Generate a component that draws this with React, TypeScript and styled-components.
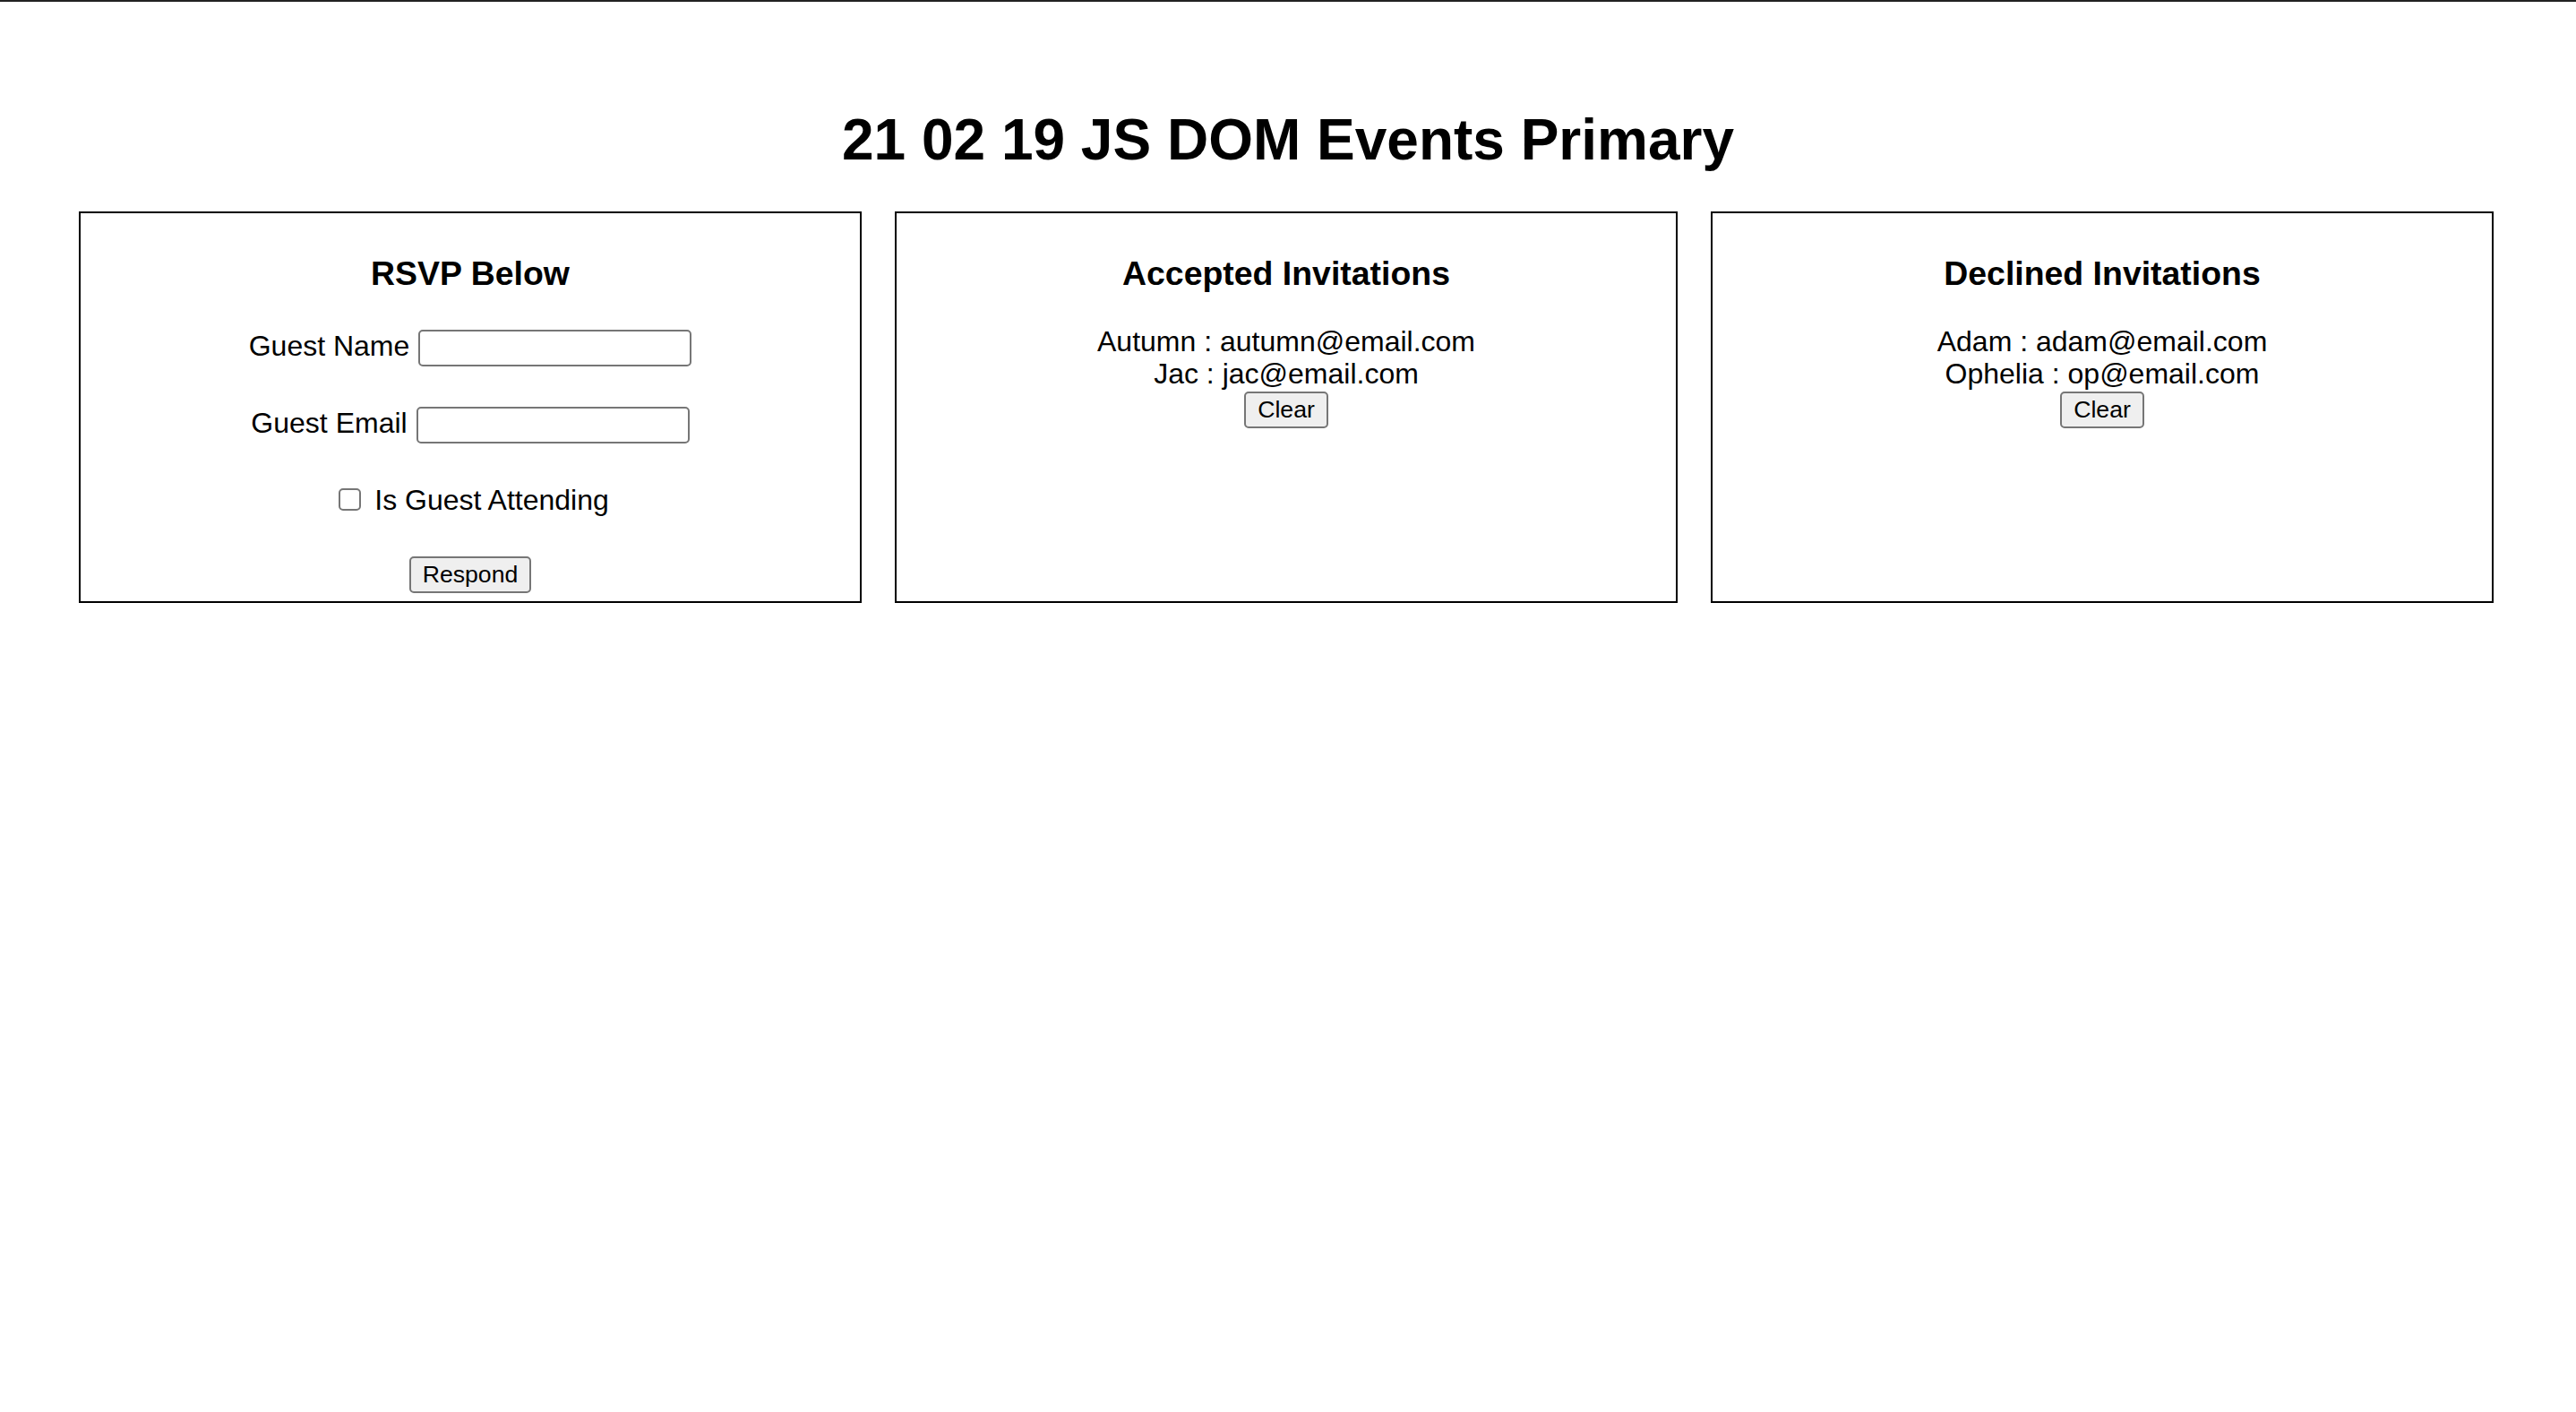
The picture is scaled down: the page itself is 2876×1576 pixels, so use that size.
import React from 'react';
import styled, { createGlobalStyle } from 'styled-components';

const accepted = [
  { name: 'Autumn', email: 'autumn@email.com' },
  { name: 'Jac', email: 'jac@email.com' },
];

const declined = [
  { name: 'Adam', email: 'adam@email.com' },
  { name: 'Ophelia', email: 'op@email.com' },
];

function GuestList({ title, guests }: { title: string; guests: { name: string; email: string }[] }) {
  return (
    <Card>
      <CardTitle>{title}</CardTitle>
      <List>
        {guests.map((guest, idx) => (
          <ListItem key={idx}>
            {guest.name} : {guest.email}
          </ListItem>
        ))}
      </List>
      <Button $top={2}>Clear</Button>
    </Card>
  );
}

export default function App() {
  return (
    <>
      <GlobalStyle />
      <Page>
        <Title>21 02 19 JS DOM Events Primary</Title>
        <Cards>
          <Card>
            <CardTitle>RSVP Below</CardTitle>
            <FieldRow $top={41}>
              <Label>Guest Name</Label>
              <TextInput type='text' />
            </FieldRow>
            <FieldRow $top={45}>
              <Label>Guest Email</Label>
              <TextInput type='text' />
            </FieldRow>
            <CheckRow>
              <Checkbox type='checkbox' />
              <Label>Is Guest Attending</Label>
            </CheckRow>
            <Button $top={44}>Respond</Button>
          </Card>
          <GuestList title='Accepted Invitations' guests={accepted} />
          <GuestList title='Declined Invitations' guests={declined} />
        </Cards>
      </Page>
    </>
  );
}

const GlobalStyle = createGlobalStyle`
  html, body {
    margin: 0;
    padding: 0;
    background: #fff;
  }
  body {
    font-family: 'Liberation Sans', Arial, sans-serif;
    color: #000;
  }
`;

const Page = styled.div`
  border-top: 2px solid #222;
  padding-top: 117px;
  min-height: 1440px;
`;

const Title = styled.h1`
  margin: 0;
  font-size: 64px;
  line-height: 74px;
  font-weight: 700;
  text-align: center;
`;

const Cards = styled.div`
  display: flex;
  gap: 37px;
  margin-top: 43px;
  padding-left: 88px;
`;

const Card = styled.div`
  box-sizing: border-box;
  width: 874px;
  height: 437px;
  border: 2px solid #000;
  display: flex;
  flex-direction: column;
  align-items: center;
  text-align: center;
`;

const CardTitle = styled.h3`
  margin: 46px 0 0;
  font-size: 37.44px;
  line-height: 43px;
  font-weight: 700;
`;

const FieldRow = styled.div<{ $top: number }>`
  display: flex;
  align-items: flex-start;
  justify-content: center;
  margin-top: ${(p) => p.$top}px;
  height: 41px;
`;

const Label = styled.span`
  font-size: 32px;
  line-height: 37px;
  white-space: nowrap;
`;

const TextInput = styled.input`
  box-sizing: border-box;
  width: 305px;
  height: 41px;
  margin: 0 0 0 10px;
  padding: 2px 4px;
  border: 2px solid #767676;
  border-radius: 5px;
  background: #fff;
  font-family: 'Liberation Sans', Arial, sans-serif;
  font-size: 26.67px;
  outline: none;
`;

const CheckRow = styled.div`
  display: flex;
  align-items: center;
  justify-content: center;
  margin-top: 45px;
  height: 37px;
`;

const Checkbox = styled.input`
  appearance: none;
  box-sizing: border-box;
  width: 25px;
  height: 25px;
  margin: 0 15px 2px 8px;
  border: 2px solid #767676;
  border-radius: 5px;
  background: #fff;
`;

const List = styled.div`
  margin-top: 36px;
`;

const ListItem = styled.div`
  font-size: 32px;
  line-height: 36px;
  white-space: nowrap;
`;

const Button = styled.button<{ $top: number }>`
  margin-top: ${(p) => p.$top}px;
  padding: 3px 13px;
  border: 2px solid #767676;
  border-radius: 5px;
  background: #efefef;
  color: #000;
  font-family: 'Liberation Sans', Arial, sans-serif;
  font-size: 26.67px;
  line-height: 30.6px;
  cursor: pointer;
`;
